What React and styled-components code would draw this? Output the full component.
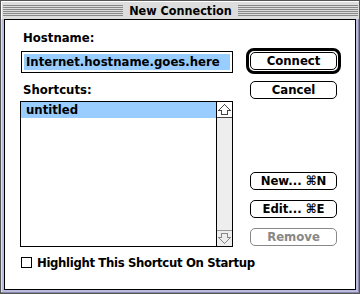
import React from "react";
import styled, { createGlobalStyle } from "styled-components";

const GlobalStyle = createGlobalStyle`
  html, body {
    margin: 0;
    padding: 0;
    background: #fff;
  }
  body {
    font-family: "DejaVu Sans Condensed", "DejaVu Sans", sans-serif;
    font-weight: bold;
    font-size: 13px;
    color: #000;
  }
`;

const Window = styled.div`
  width: 360px;
  height: 294px;
  box-sizing: border-box;
  border: 1px solid #555;
  background: #bbbbdd;
  display: flex;
  flex-direction: column;
`;

const TitleBar = styled.div`
  height: 18px;
  box-sizing: border-box;
  background: #dddddd;
  border-top: 1px solid #fff;
  border-left: 1px solid #fff;
  display: flex;
  align-items: center;
  padding: 0 1px 0 1px;
`;

const Stripes = styled.div`
  flex: 1;
  height: 11px;
  background: repeating-linear-gradient(
    to bottom,
    #888 0px,
    #888 1px,
    #ddd 1px,
    #ddd 2px
  );
`;

const Title = styled.div`
  padding: 0 6px;
  line-height: 16px;
  font-size: 12.5px;
`;

const Frame = styled.div`
  flex: 1;
  display: flex;
  padding: 0 3px 3px 3px;
  box-shadow: inset -1px -1px 0 #8888aa, inset 1px 0 0 #ddddff;
`;

const Panel = styled.div`
  flex: 1;
  display: flex;
  background: #fff;
  border: 1px solid #000;
  padding: 10px 0 0 15px;
`;

const LeftColumn = styled.div`
  width: 213px;
  display: flex;
  flex-direction: column;
`;

const RightColumn = styled.div`
  margin-left: 13px;
  width: 95px;
  display: flex;
  flex-direction: column;
  align-items: center;
  padding-top: 18px;
`;

const Label = styled.div`
  padding-left: 3px;
  line-height: 15px;
  margin-top: ${(p) => p.$top || 0}px;
`;

const InputBox = styled.div`
  margin-top: 6px;
  height: 22px;
  box-sizing: border-box;
  border: 1px solid #000;
  padding: 2px;
  margin-left: 1px;
  width: 212px;
`;

const Selected = styled.div`
  height: 16px;
  background: #99ccff;
  line-height: 16px;
  padding-left: 2px;
  white-space: nowrap;
  overflow: hidden;
`;

const ListBox = styled.div`
  margin-top: 4px;
  height: 146px;
  box-sizing: border-box;
  border: 1px solid #000;
  display: flex;
`;

const ListItems = styled.div`
  flex: 1;
`;

const ListRow = styled.div`
  height: 16px;
  line-height: 16px;
  padding-left: 5px;
  background: ${(p) => (p.$selected ? "#99ccff" : "#fff")};
`;

const ScrollBar = styled.div`
  width: 15px;
  border-left: 1px solid #000;
  background: #eeeeee;
  display: flex;
  flex-direction: column;
  justify-content: space-between;
`;

const ArrowBox = styled.div`
  height: 15px;
  display: flex;
  align-items: center;
  justify-content: center;
  background: ${(p) => (p.$down ? "#eeeeee" : "#fff")};
  border-bottom: ${(p) => (p.$down ? "none" : "1px solid #444")};
  border-top: ${(p) => (p.$down ? "1px solid #999" : "none")};
`;

const CheckRow = styled.div`
  margin-top: 8px;
  display: flex;
  align-items: center;
  gap: 5px;
  padding-left: 1px;
  white-space: nowrap;
  letter-spacing: -0.35px;
`;

const CheckBox = styled.div`
  flex-shrink: 0;
  width: 11px;
  height: 11px;
  box-sizing: border-box;
  border: 1px solid #000;
  background: #fff;
`;

const DefaultRing = styled.div`
  width: 95px;
  height: 26px;
  box-sizing: border-box;
  border: 3px solid #000;
  border-radius: 8px;
  padding: 1px;
  display: flex;
`;

const Button = styled.div`
  width: 87px;
  height: 18px;
  box-sizing: border-box;
  border: 1px solid ${(p) => (p.$disabled ? "#888" : "#000")};
  border-radius: 5px;
  background: #fff;
  color: ${(p) => (p.$disabled ? "#888" : "#000")};
  display: flex;
  align-items: center;
  justify-content: center;
  line-height: 16px;
  margin-top: ${(p) => p.$top || 0}px;
  white-space: nowrap;
`;

const ArrowIcon = ({ down, color }) => (
  <svg
    width="13"
    height="11"
    viewBox="0 0 13 11"
    shapeRendering="crispEdges"
    style={{ transform: down ? "scaleY(-1)" : "none" }}
  >
    <polygon
      points="6.5,0.5 12.5,6.5 9.5,6.5 9.5,10.5 3.5,10.5 3.5,6.5 0.5,6.5"
      fill="none"
      stroke={color}
      strokeWidth="1"
    />
  </svg>
);

export default function App() {
  return (
    <>
      <GlobalStyle />
      <Window>
        <TitleBar>
          <Stripes />
          <Title>New Connection</Title>
          <Stripes />
        </TitleBar>
        <Frame>
          <Panel>
            <LeftColumn>
              <Label>Hostname:</Label>
              <InputBox>
                <Selected>Internet.hostname.goes.here</Selected>
              </InputBox>
              <Label $top={9}>Shortcuts:</Label>
              <ListBox>
                <ListItems>
                  <ListRow $selected>untitled</ListRow>
                </ListItems>
                <ScrollBar>
                  <ArrowBox>
                    <ArrowIcon color="#444" />
                  </ArrowBox>
                  <ArrowBox $down>
                    <ArrowIcon down color="#888" />
                  </ArrowBox>
                </ScrollBar>
              </ListBox>
              <CheckRow>
                <CheckBox />
                <span>Highlight This Shortcut On Startup</span>
              </CheckRow>
            </LeftColumn>
            <RightColumn>
              <DefaultRing>
                <Button>Connect</Button>
              </DefaultRing>
              <Button $top={7}>Cancel</Button>
              <Button $top={73}>New... ⌘N</Button>
              <Button $top={10}>Edit... ⌘E</Button>
              <Button $top={10} $disabled>
                Remove
              </Button>
            </RightColumn>
          </Panel>
        </Frame>
      </Window>
    </>
  );
}
